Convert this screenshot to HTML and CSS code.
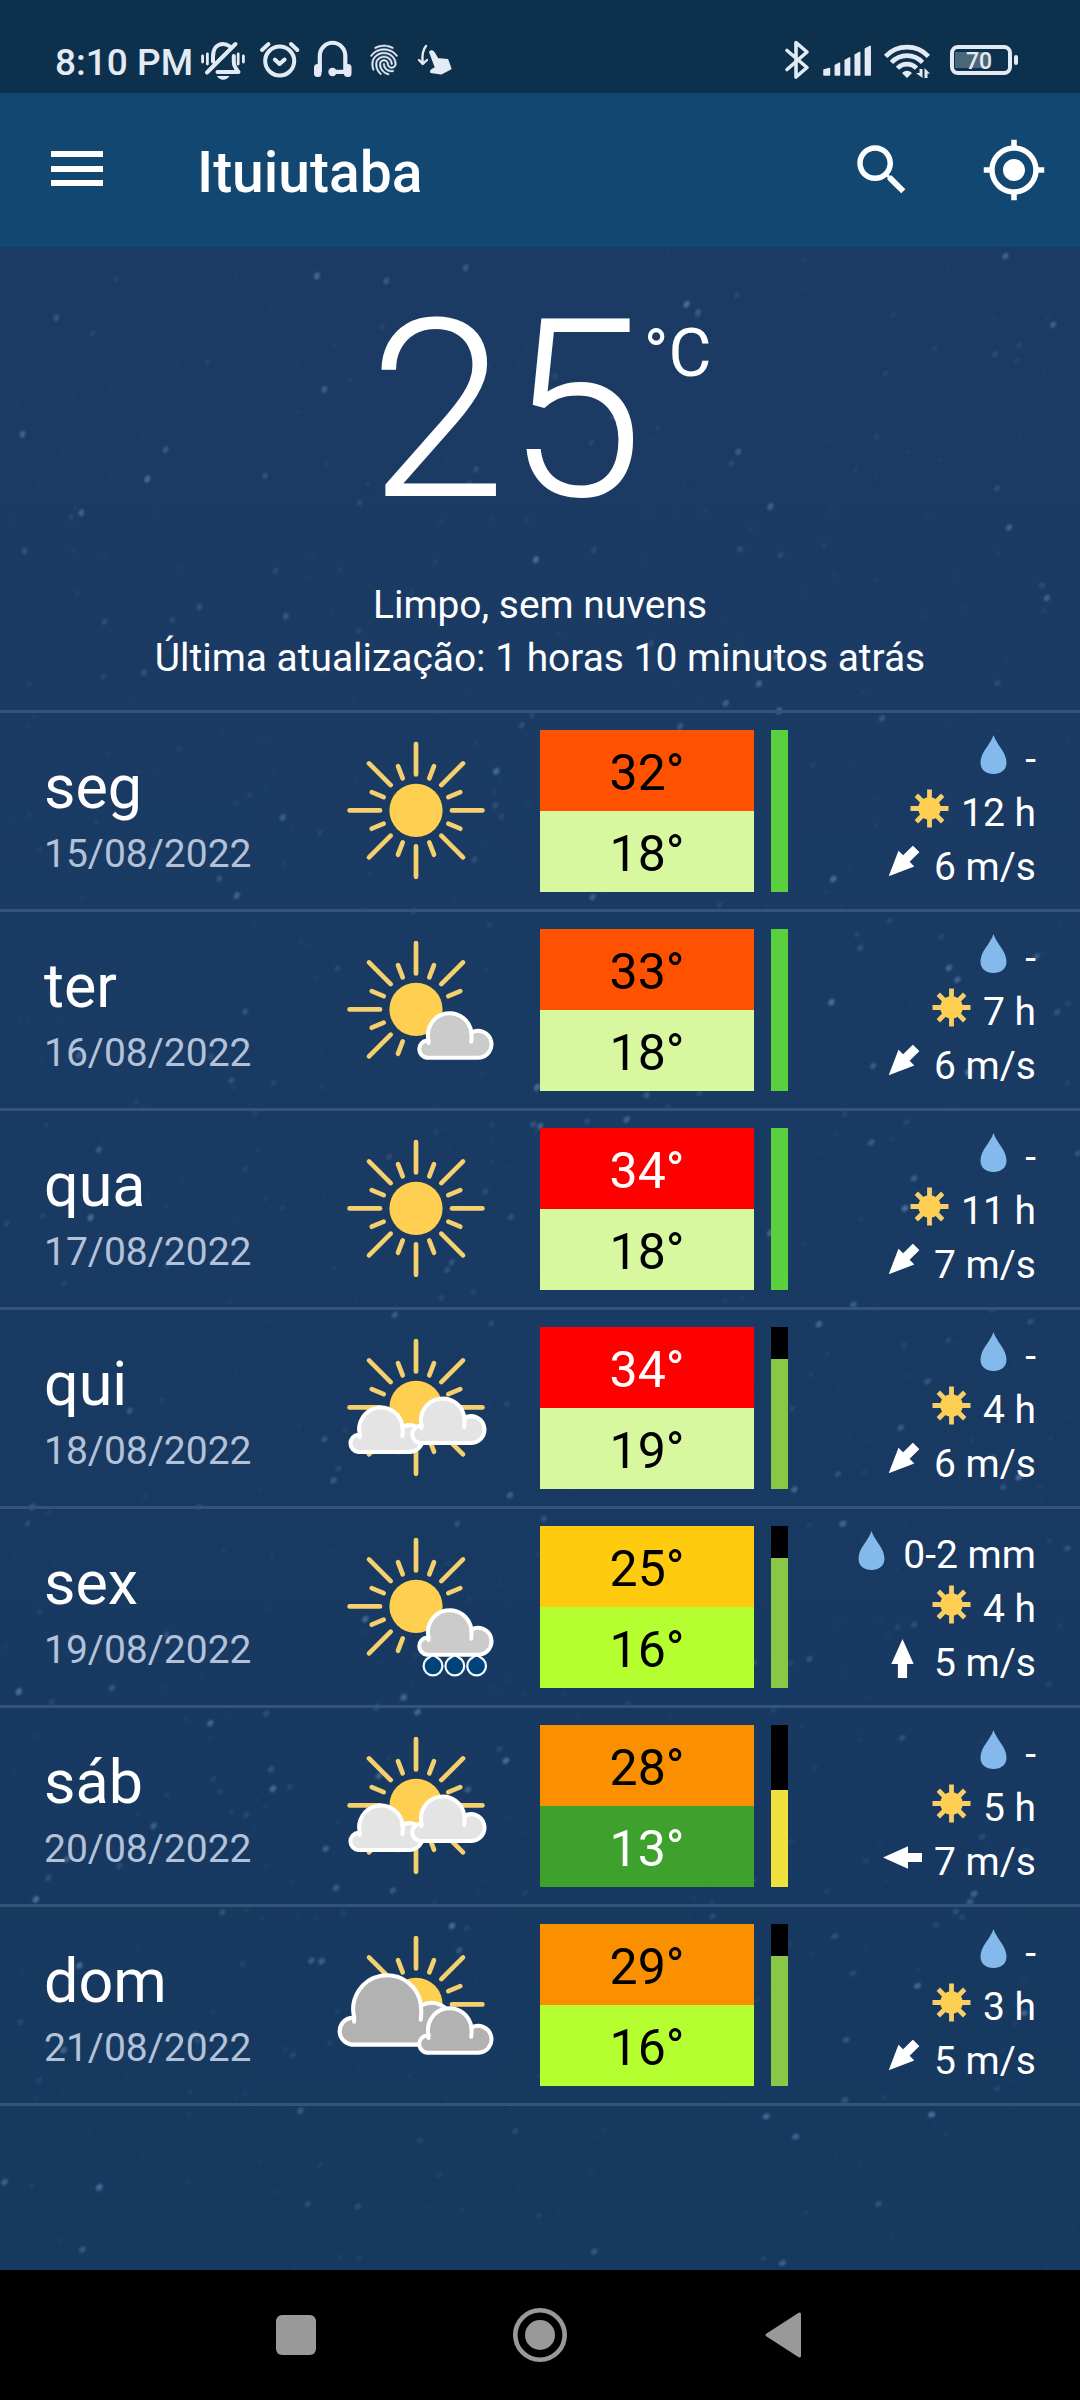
FILE: index.html
```html
<!DOCTYPE html>
<html lang="pt">
<head>
<meta charset="utf-8">
<title>Ituiutaba</title>
<link rel="stylesheet" href="styles.css">
</head>
<body>
<svg class="defs" width="0" height="0">
  <defs>
    <path id="ray" d="M0-66.4V-36"/>
    <path id="diag" d="M47-47 25.3-25.3"/>
    <path id="short" d="M18-44.3 13.3-32"/>
    <path id="short2" d="M44.3-18.3 32.3-13.3"/>
    <circle id="disc" r="26.6"/>
    <g id="upper">
      <use href="#ray"/><use href="#diag"/><use href="#diag" transform="scale(-1 1)"/>
      <use href="#short"/><use href="#short" transform="scale(-1 1)"/>
      <use href="#short2"/>
    </g>
    <g id="left">
      <use href="#short2" transform="scale(-1 1)"/><use href="#short2" transform="scale(-1 -1)"/>
      <use href="#ray" transform="rotate(-90)"/><use href="#diag" transform="scale(-1 -1)"/><use href="#short" transform="scale(-1 -1)"/>
    </g>
    <g id="right">
      <use href="#ray" transform="rotate(90)"/><use href="#ray" transform="rotate(180)"/>
      <use href="#diag" transform="scale(1 -1)"/><use href="#short" transform="scale(1 -1)"/><use href="#short2" transform="scale(1 -1)"/>
    </g>
    <g id="cloud">
      <path d="M11 48.3A8.7 8.7 0 0 1 11 31L12.6 31A21.8 21.8 0 1 1 55.4 23.3A13.4 13.4 0 1 1 62.5 48.3Z"/>
      <path fill="none" d="M12.5 30.5V33.6M55.2 23.3Q56 27 55.2 32.3"/>
    </g>
    <path id="rain" d="M0-11 6.8-6.2A9.400 9.400 0 1 1-6.800-6.200Z"/>

    <symbol id="w-clear" viewBox="-80 -79.4 160 160">
      <g class="rays"><use href="#upper"/><use href="#left"/><use href="#right"/></g><use href="#disc" class="disc"/>
    </symbol>
    <symbol id="w-fair" viewBox="-80 -79.4 160 160">
      <g class="rays"><use href="#upper"/><use href="#left"/></g><use href="#disc" class="disc"/>
      <use href="#cloud" class="cloud mid"/>
    </symbol>
    <symbol id="w-partly" viewBox="-80 -79.4 160 160">
      <g class="rays"><use href="#upper"/><use href="#left"/><use href="#right"/></g><use href="#disc" class="disc"/>
      <use href="#cloud" class="cloud light" transform="translate(-68.8 -3.7)"/>
      <use href="#cloud" class="cloud light" transform="translate(-7 -12.7)"/>
    </symbol>
    <symbol id="w-showers" viewBox="-80 -79.4 160 160">
      <g class="rays"><use href="#upper"/><use href="#left"/></g><use href="#disc" class="disc"/>
      <g class="rain"><use href="#rain" x="17" y="59.3"/><use href="#rain" x="38.8" y="59.3"/><use href="#rain" x="60.6" y="59.3"/></g>
      <use href="#cloud" class="cloud mid"/>
    </symbol>
    <symbol id="w-cloudy" viewBox="-80 -79.4 160 160">
      <g class="rays"><use href="#upper"/><use href="#ray" transform="rotate(90)"/></g><use href="#disc" class="disc"/>
      <use href="#cloud" class="cloud dark big" transform="translate(-81.4 -35.1) scale(1.56)"/>
      <use href="#cloud" class="cloud dark"/>
    </symbol>

    <symbol id="i-drop" viewBox="0 0 39 39"><path fill="#84b9ec" d="M19.5 0C22 9 32.5 17 32.5 27.500C32.500 35 27 39 19.500 39S6.500 35 6.500 27.500C6.500 17 17 9 19.500 0Z"/></symbol>
    <symbol id="i-sun" viewBox="-19.500 -19.500 39 39">
      <path stroke="#f6cf6a" stroke-width="4.800" d="M0-19V19M-19 0H19M-13.200-13.200 13.200 13.200M-13.200 13.200 13.200-13.200"/><circle r="11.200" fill="#ffcf51"/>
    </symbol>
    <symbol id="i-wind" viewBox="-19.500 -19.500 39 39"><path fill="#fff" d="M0-19.500 11.200 5.500H4.600V19.500H-4.600V5.500H-11.200Z"/></symbol>
  </defs>
</svg>

<header class="status">
  <span class="clock">8:10 PM</span>
  <svg class="st-bell" viewBox="200 40 46 42" width="46" height="42">
    <g fill="none" stroke="currentColor" stroke-linecap="round" stroke-width="2.8"><path d="M202.600 56v6M207.400 54v10M238.200 54v10M243.400 56v6"/>
    <path stroke-width="4" stroke-linejoin="round" d="M213 61.500V57C213 48 217.500 44 223 44C226 44 228 45 230 46.500M235.500 44 207 72.500M217.500 72H238.500C236 69 233.800 66 233.800 62V56"/></g>
    <path fill="currentColor" d="M217 76H229.500Q227 79.800 223.200 79.800T217 76"/>
  </svg>
  <svg class="st-alarm" viewBox="258 40 44 42" width="44" height="42">
    <g fill="none" stroke="currentColor" stroke-width="4" stroke-linecap="round" stroke-linejoin="round"><circle cx="279.700" cy="61" r="14.500"/><path d="M274.800 59.500 279.600 64 284.600 59.500M262 50 268.500 44M291 44 297.300 50"/></g>
  </svg>
  <svg class="st-head" viewBox="312 40 42 42" width="42" height="42">
    <path fill="none" stroke="currentColor" stroke-width="4.200" d="M319.800 72V56A12.500 13 0 0 1 345.300 56V72M332 71.800H347"/>
    <rect x="314" y="64" width="7.500" height="13" rx="3.500" fill="currentColor"/><rect x="344" y="64" width="7.500" height="13" rx="3.500" fill="currentColor"/><circle cx="332.500" cy="72" r="4.200" fill="currentColor"/>
  </svg>
  <svg class="st-finger" viewBox="0 0 24 24" width="36" height="36"><path fill="currentColor" stroke="currentColor" stroke-width=".35" d="M17.810 4.470c-.08 0-.16-.02-.23-.06C15.660 3.420 14 3 12.010 3c-1.980 0-3.860.47-5.570 1.410-.24.13-.54.04-.68-.2-.13-.24-.04-.55.2-.68C7.820 2.520 9.860 2 12.010 2c2.130 0 3.990.47 6.030 1.520.25.13.34.43.21.67-.09.18-.26.28-.44.28zM3.500 9.720c-.1 0-.2-.03-.29-.09-.23-.16-.28-.47-.12-.7.99-1.400 2.250-2.500 3.750-3.270C9.980 4.040 14 4.030 17.150 5.650c1.500.77 2.760 1.860 3.750 3.250.16.22.11.54-.12.7-.23.16-.54.11-.7-.12-.9-1.260-2.040-2.250-3.390-2.940-2.870-1.470-6.540-1.470-9.400.01-1.360.7-2.500 1.700-3.400 2.960-.08.14-.23.21-.39.21zm6.250 12.070c-.13 0-.26-.05-.35-.15-.87-.87-1.340-1.430-2.010-2.640-.69-1.230-1.050-2.730-1.050-4.340 0-2.970 2.540-5.390 5.660-5.390s5.660 2.420 5.660 5.390c0 .28-.22.5-.5.5s-.5-.22-.5-.5c0-2.420-2.090-4.390-4.660-4.390-2.570 0-4.660 1.970-4.660 4.390 0 1.440.32 2.770.93 3.850.64 1.150 1.080 1.640 1.850 2.420.19.2.19.51 0 .71-.11.1-.24.15-.37.15zm7.170-1.850c-1.190 0-2.240-.3-3.100-.89-1.490-1.010-2.380-2.650-2.380-4.390 0-.28.22-.5.5-.5s.5.22.5.5c0 1.410.72 2.740 1.940 3.560.71.48 1.540.71 2.540.71.24 0 .64-.03 1.040-.1.27-.05.53.13.58.41.05.27-.13.53-.41.58-.57.11-1.070.12-1.210.12zM14.910 22c-.04 0-.09-.01-.13-.02-1.590-.44-2.630-1.030-3.720-2.100-1.400-1.390-2.170-3.240-2.170-5.220 0-1.620 1.380-2.940 3.080-2.940 1.700 0 3.080 1.320 3.080 2.940 0 1.070.93 1.940 2.080 1.940s2.080-.87 2.080-1.940c0-3.770-3.250-6.830-7.250-6.830-2.840 0-5.440 1.580-6.610 4.030-.39.81-.59 1.760-.59 2.800 0 .78.07 2.010.67 3.610.1.26-.03.55-.29.64-.26.1-.55-.04-.64-.29-.49-1.310-.73-2.610-.73-3.960 0-1.200.23-2.290.68-3.240 1.330-2.790 4.280-4.600 7.510-4.600 4.550 0 8.250 3.510 8.250 7.830 0 1.620-1.380 2.940-3.080 2.940s-3.080-1.320-3.080-2.940c0-1.070-.93-1.940-2.080-1.940s-2.080.87-2.080 1.940c0 1.710.66 3.310 1.870 4.510.95.94 1.860 1.460 3.270 1.850.27.07.42.35.35.61-.05.23-.26.38-.47.38z"/></svg>
  <svg class="st-hand" viewBox="416 40 38 42" width="38" height="42">
    <path fill="none" stroke="currentColor" stroke-width="2.400" stroke-linecap="round" stroke-linejoin="round" d="M426 46C422.500 50 422 55 422.600 62M419 60 422.800 64 427 60"/>
    <path fill="currentColor" stroke="currentColor" stroke-width="2" stroke-linejoin="round" d="M430 52Q432 50 434 53L437.500 59 447.500 60 450.500 68.500 441 73.500 431 72Q430.500 70 436 68Z"/>
  </svg>
  <svg class="st-bt" viewBox="784 40 26 40" width="26" height="40"><path fill="none" stroke="currentColor" stroke-width="3.600" stroke-linecap="round" stroke-linejoin="round" d="M787 50.500 807 67.500 796 77V42.500L807 52 787 69.500"/></svg>
  <svg class="st-signal" viewBox="822 40 50 40" width="50" height="40"><path fill="currentColor" stroke="currentColor" stroke-width="1.500" stroke-linejoin="round" d="M824 75V70L829.500 68.500V75ZM835.300 75V65.500L839.500 63.200V75ZM845.200 75V60.500L849.600 57.800V75ZM855.200 75V55L859.700 52.400V75ZM865.400 75V49L870.200 46.400V75Z"/></svg>
  <svg class="st-wifi" viewBox="882 40 50 40" width="50" height="40">
    <path fill="none" stroke="currentColor" stroke-width="4.600" d="M885.600 56.300A29.500 29.500 0 0 1 928.400 56.300M891.500 62.500A21 21 0 0 1 922.500 62.500M897.500 68.300A13 13 0 0 1 916.500 68.300"/>
    <path fill="currentColor" d="M902 73Q907 68.500 912 73L907 78ZM919.500 69H922.500V78L916 73H919.500ZM924.500 78V68L930 73.500H927.500V78Z"/>
  </svg>
  <div class="battery"><div class="level"></div><span>70</span></div>
</header>

<nav class="appbar">
  <div class="menu"><i></i><i></i><i></i></div>
  <h1>Ituiutaba</h1>
  <svg class="search" viewBox="0 0 24 24" width="66" height="66"><path fill="#fff" d="M15.500 14h-.79l-.28-.27C15.410 12.590 16 11.110 16 9.500 16 5.910 13.090 3 9.500 3S3 5.910 3 9.500 5.910 16 9.500 16c1.610 0 3.090-.59 4.230-1.570l.27.28v.79l5 4.990L20.490 19l-4.990-5zm-6 0C7.010 14 5 11.990 5 9.500S7.010 5 9.500 5 14 7.010 14 9.500 11.990 14 9.500 14z"/></svg>
  <svg viewBox="0 0 24 24" width="66" height="66"><path fill="#fff" d="M12 8c-2.210 0-4 1.790-4 4s1.790 4 4 4 4-1.790 4-4-1.790-4-4-4zm8.940 3c-.46-4.170-3.770-7.480-7.940-7.940V1h-2v2.060C6.830 3.520 3.520 6.830 3.060 11H1v2h2.060c.46 4.170 3.770 7.480 7.940 7.940V23h2v-2.060c4.170-.46 7.480-3.770 7.940-7.940H23v-2h-2.060zM12 19c-3.870 0-7-3.130-7-7s3.130-7 7-7 7 3.130 7 7-3.130 7-7 7z"/></svg>
</nav>

<main class="sky">
  <svg class="stars" id="stars" viewBox="0 0 1080 2023" width="1080" height="2023"></svg>
  <section class="hero">
    <div class="now"><span class="deg">25</span><span class="unit">°C</span></div>
    <p>Limpo, sem nuvens</p>
    <p>Última atualização: 1 horas 10 minutos atrás</p>
  </section>

  <section class="days">
    <article class="day">
      <div class="when"><b>seg</b><time>15/08/2022</time></div>
      <svg class="weather"><use href="#w-clear"/></svg>
      <div class="temps"><span class="t32">32°</span><span class="t18">18°</span></div>
      <div class="trust"><div class="q-full" style="height:100%"></div></div>
      <div class="info"><div><svg><use href="#i-drop"/></svg>-</div><div><svg><use href="#i-sun"/></svg>12 h</div><div><svg class="sw"><use href="#i-wind"/></svg>6 m/s</div></div>
    </article>
    <article class="day">
      <div class="when"><b>ter</b><time>16/08/2022</time></div>
      <svg class="weather"><use href="#w-fair"/></svg>
      <div class="temps"><span class="t32">33°</span><span class="t18">18°</span></div>
      <div class="trust"><div class="q-full" style="height:100%"></div></div>
      <div class="info"><div><svg><use href="#i-drop"/></svg>-</div><div><svg><use href="#i-sun"/></svg>7 h</div><div><svg class="sw"><use href="#i-wind"/></svg>6 m/s</div></div>
    </article>
    <article class="day">
      <div class="when"><b>qua</b><time>17/08/2022</time></div>
      <svg class="weather"><use href="#w-clear"/></svg>
      <div class="temps"><span class="t34">34°</span><span class="t18">18°</span></div>
      <div class="trust"><div class="q-full" style="height:100%"></div></div>
      <div class="info"><div><svg><use href="#i-drop"/></svg>-</div><div><svg><use href="#i-sun"/></svg>11 h</div><div><svg class="sw"><use href="#i-wind"/></svg>7 m/s</div></div>
    </article>
    <article class="day">
      <div class="when"><b>qui</b><time>18/08/2022</time></div>
      <svg class="weather"><use href="#w-partly"/></svg>
      <div class="temps"><span class="t34">34°</span><span class="t18">19°</span></div>
      <div class="trust"><div class="q-good" style="height:80%"></div></div>
      <div class="info"><div><svg><use href="#i-drop"/></svg>-</div><div><svg><use href="#i-sun"/></svg>4 h</div><div><svg class="sw"><use href="#i-wind"/></svg>6 m/s</div></div>
    </article>
    <article class="day">
      <div class="when"><b>sex</b><time>19/08/2022</time></div>
      <svg class="weather"><use href="#w-showers"/></svg>
      <div class="temps"><span class="t25">25°</span><span class="t16">16°</span></div>
      <div class="trust"><div class="q-good" style="height:80%"></div></div>
      <div class="info"><div><svg><use href="#i-drop"/></svg>0-2 mm</div><div><svg><use href="#i-sun"/></svg>4 h</div><div><svg><use href="#i-wind"/></svg>5 m/s</div></div>
    </article>
    <article class="day">
      <div class="when"><b>sáb</b><time>20/08/2022</time></div>
      <svg class="weather"><use href="#w-partly"/></svg>
      <div class="temps"><span class="t28">28°</span><span class="t13">13°</span></div>
      <div class="trust"><div class="q-fair" style="height:60%"></div></div>
      <div class="info"><div><svg><use href="#i-drop"/></svg>-</div><div><svg><use href="#i-sun"/></svg>5 h</div><div><svg class="w"><use href="#i-wind"/></svg>7 m/s</div></div>
    </article>
    <article class="day">
      <div class="when"><b>dom</b><time>21/08/2022</time></div>
      <svg class="weather"><use href="#w-cloudy"/></svg>
      <div class="temps"><span class="t28">29°</span><span class="t16">16°</span></div>
      <div class="trust"><div class="q-good" style="height:80%"></div></div>
      <div class="info"><div><svg><use href="#i-drop"/></svg>-</div><div><svg><use href="#i-sun"/></svg>3 h</div><div><svg class="sw"><use href="#i-wind"/></svg>5 m/s</div></div>
    </article>
  </section>
</main>

<footer class="softkeys">
  <svg viewBox="0 0 1080 130" width="1080" height="130" fill="#999">
    <rect x="276" y="45" width="40" height="40" rx="6"/>
    <circle cx="540" cy="65" r="24.700" fill="none" stroke="#999" stroke-width="4.600"/><circle cx="540" cy="65" r="15"/>
    <path stroke="#999" stroke-width="3" stroke-linejoin="round" d="M799.500 44V86L767 65Z"/>
  </svg>
</footer>
<script src="stars.js"></script>
</body>
</html>
```
FILE: styles.css
```css
* { box-sizing: border-box; }
body { margin: 0; width: 1080px; height: 2400px; background: #000; color: #fff; font-family: Roboto, "Noto Sans", sans-serif; overflow: hidden; display: flex; flex-direction: column; }
svg { display: block; flex: none; }
.defs { position: absolute; }

.status { height: 93px; background: #0d304d; color: #e3eaf4; display: flex; align-items: flex-start; padding: 40px 62px 0 55px; }
.clock { font-size: 37px; line-height: 45px; font-weight: 500; width: 145px; white-space: nowrap; }
.st-alarm { margin-left: 12px; }
.st-head { margin-left: 10px; }
.st-finger { margin: 2px 0 0 12px; }
.st-hand { margin-left: 14px; }
.st-bt { margin-left: auto; }
.st-signal { margin-left: 12px; }
.st-wifi { margin: 0 18px 0 10px; }
.battery { position: relative; width: 62px; height: 30px; margin: 5px 6px 0 0; border: 4px solid currentColor; border-radius: 8px; font-size: 23px; line-height: 25px; font-weight: 500; text-align: center; flex: none; }
.battery::after { content: ""; position: absolute; left: 60px; top: 6px; width: 4px; height: 10px; border-radius: 2px; background: currentColor; }
.battery .level { position: absolute; left: 1px; top: 3px; width: 33px; height: 16px; background: #4b6579; }
.battery span { position: relative; left: -2px; }

.appbar { height: 154px; background: #124772; display: flex; align-items: flex-start; padding: 44px 33px 0 51px; }
.menu { width: 52px; margin-top: 14px; display: flex; flex-direction: column; gap: 8.700px; }
.menu i { height: 6px; background: #fff; }
h1 { margin: 0 auto 0 94px; font-size: 57px; line-height: 64px; font-weight: 500; padding-top: 4px; flex: none; }
.search { margin-right: 66px; }

.sky { position: relative; height: 2023px; background: linear-gradient(#1b3b65, #193a63 50%, #163960); }
.stars { position: absolute; left: 0; top: 0; filter: blur(1px); }
.hero { position: relative; height: 463px; padding-top: 20px; text-align: center; }
.now { display: flex; justify-content: center; height: 290px; margin-bottom: 20.500px; }
.deg { font-size: 248px; line-height: 290px; font-weight: 300; }
.unit { font-size: 66px; line-height: 77px; margin-top: 48px; font-weight: 400; }
.hero p { margin: 0; font-size: 38.900px; line-height: 53px; }

.days { position: relative; border-bottom: 3px solid #355277; }
.day { height: 199px; border-top: 3px solid #355277; padding: 17px 44px 17px 44px; display: flex; }
.when { width: 292px; padding-top: 22px; }
.when b { display: block; font-weight: 400; font-size: 61px; line-height: 71px; }
.when time { display: block; margin-top: 8px; font-size: 39px; line-height: 46px; color: #b3c2d8; }
.weather { width: 160px; height: 160px; margin: 1px 44px 0 0; overflow: visible; }
.rays { fill: none; stroke: #f5d06c; stroke-width: 4.700; stroke-linecap: round; }
.disc { fill: #ffcf51; }
.cloud { stroke: #fff; stroke-width: 4; stroke-linecap: round; stroke-linejoin: round; }
.cloud.big { stroke-width: 2.600; }
.light { fill: #e4e4e4; }
.mid { fill: #cbcbcb; }
.dark { fill: #b2b2b2; }
.rain { fill: #00437a; stroke: #f2f8fd; stroke-width: 2.200; stroke-linejoin: round; }

.temps { width: 214px; height: 162px; flex: none; display: flex; flex-direction: column; font-size: 50px; text-align: center; color: #000; }
.temps span { height: 81px; line-height: 86px; }
.t32 { background: #ff5200; }
.temps .t34 { background: #f00; color: #fff; }
.t28 { background: #fa9000; }
.t25 { background: #fecb0e; }
.t18 { background: #d7f89f; }
.t16 { background: #b5ff30; }
.temps .t13 { background: #3ea12d; color: #fff; }
.trust { width: 17px; height: 162px; margin-left: 17px; background: #000; display: flex; flex-direction: column; justify-content: flex-end; flex: none; }
.q-full { background: #5bd03f; }
.q-good { background: #8bc746; }
.q-fair { background: #f1e13d; }
.info { flex: 1; padding-top: 2px; font-size: 39px; line-height: 54px; }
.info div { height: 54px; display: flex; justify-content: flex-end; align-items: center; gap: 12px; white-space: nowrap; }
.info svg { width: 39px; height: 39px; margin-bottom: 9px; }
.sw { transform: rotate(-135deg); }
.w { transform: rotate(-90deg); }

.softkeys { height: 130px; background: #000; }
```
FILE: stars.js
```js
// Scatters faint snow-like flecks over the sky, with a fixed seed.
const field = document.getElementById("stars");
let seed = 4711;
const rnd = () => (seed = (seed * 16807) % 2147483647) / 2147483647;
for (let i = 0; i < 800; i++) {
  const fleck = document.createElementNS("http://www.w3.org/2000/svg", "ellipse");
  const x = rnd() * 1080, y = rnd() * 2023, glow = rnd();
  fleck.setAttribute("rx", 1.8 + glow);
  fleck.setAttribute("ry", 2.4 + glow * 1.3);
  fleck.setAttribute("fill", "#7fa6d2");
  fleck.setAttribute("opacity", (0.05 + 0.42 * glow ** 5).toFixed(2));
  fleck.setAttribute("transform", `translate(${x.toFixed(1)} ${y.toFixed(1)}) rotate(${(10 + x / 40 + y / 60).toFixed(0)})`);
  field.appendChild(fleck);
}
```
